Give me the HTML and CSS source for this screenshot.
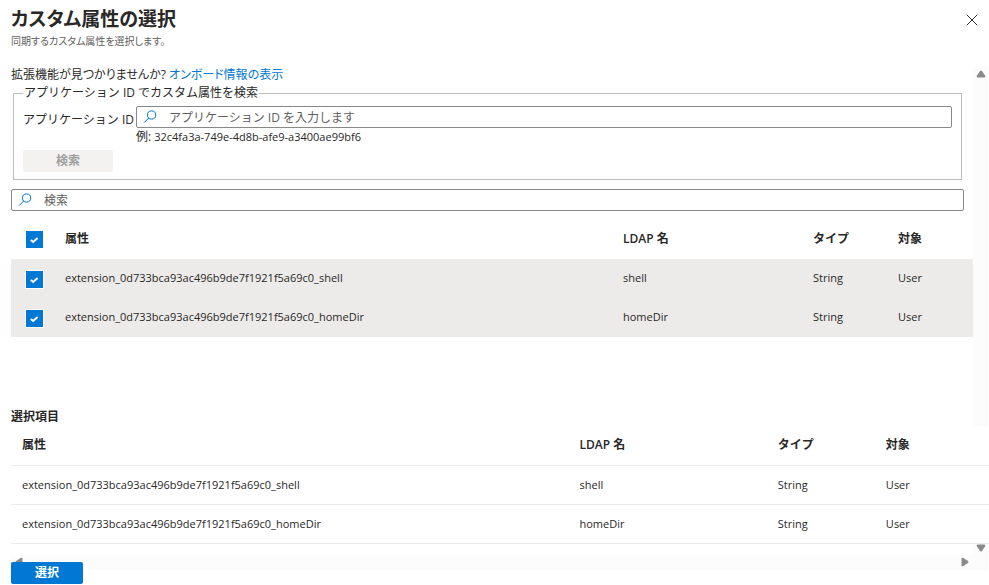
FILE: index.html
```html
<!DOCTYPE html>
<html lang="ja">
<head>
<meta charset="utf-8">
<meta name="viewport" content="width=device-width, initial-scale=1">
<title>カスタム属性の選択</title>
<link rel="stylesheet" href="styles.css">
</head>
<body>
<header class="header">
  <div>
    <h1 class="title">カスタム属性の選択</h1>
    <p class="subtitle">同期するカスタム属性を選択します。</p>
  </div>
  <button class="close" type="button" aria-label="閉じる">
    <svg width="12" height="12" viewBox="0 0 12 12"><path d="M.8.8l10.4 10.4M11.2.8L.8 11.2" fill="none" stroke="#323130" stroke-width="1"/></svg>
  </button>
</header>
<main class="body">
  <div class="vtrack">
    <svg width="10" height="8" viewBox="0 0 10 8"><path d="M4 1Q5 0 6 1L9.3 6Q9.6 7.3 8.5 7.5H1.5Q.4 7.3.7 6Z" fill="#8a8a8a"/></svg>
    <svg width="10" height="8" viewBox="0 0 10 8"><path d="M4 7Q5 8 6 7L9.3 2Q9.6.7 8.5.5H1.5Q.4.7.7 2Z" fill="#8a8a8a"/></svg>
  </div>
  <div class="content">
    <p class="hint">拡張機能が見つかりませんか? <a class="link" href="#">オンボード情報の表示</a></p>
    <fieldset class="group">
      <legend class="legend">アプリケーション ID でカスタム属性を検索</legend>
      <div class="field">
        <label class="label" for="app-id">アプリケーション ID</label>
        <div class="control">
          <div class="search">
            <svg class="glass" width="14" height="14" viewBox="0 0 14 14"><g fill="none" stroke="#0078d4" stroke-width="1"><circle cx="8.6" cy="5" r="4.1"/><path d="M5.7 8L1 12.7"/></g></svg>
            <input class="input" id="app-id" type="text" placeholder="アプリケーション ID を入力します">
          </div>
          <p class="example">例: <span class="code">32c4fa3a-749e-4d8b-afe9-a3400ae99bf6</span></p>
        </div>
      </div>
      <button class="button" type="button" disabled>検索</button>
    </fieldset>
    <div class="search">
      <svg class="glass" width="14" height="14" viewBox="0 0 14 14"><g fill="none" stroke="#0078d4" stroke-width="1"><circle cx="8.6" cy="5" r="4.1"/><path d="M5.7 8L1 12.7"/></g></svg>
      <input class="input" type="text" placeholder="検索" aria-label="検索">
    </div>
  </div>
  <table class="table choices">
    <colgroup><col class="c-check"><col class="c-name"><col class="c-ldap"><col class="c-type"><col class="c-target"></colgroup>
    <thead>
      <tr><th><input class="check" type="checkbox" checked aria-label="すべて選択"></th><th>属性</th><th>LDAP 名</th><th>タイプ</th><th>対象</th></tr>
    </thead>
    <tbody>
      <tr><td><input class="check" type="checkbox" checked aria-label="shell"></td><td>extension_0d733bca93ac496b9de7f1921f5a69c0_shell</td><td>shell</td><td>String</td><td>User</td></tr>
      <tr><td><input class="check" type="checkbox" checked aria-label="homeDir"></td><td>extension_0d733bca93ac496b9de7f1921f5a69c0_homeDir</td><td>homeDir</td><td>String</td><td>User</td></tr>
    </tbody>
  </table>
  <h2 class="heading">選択項目</h2>
  <table class="table chosen">
    <colgroup><col class="s-name"><col class="s-ldap"><col class="s-type"><col class="s-target"></colgroup>
    <thead>
      <tr><th>属性</th><th>LDAP 名</th><th>タイプ</th><th>対象</th></tr>
    </thead>
    <tbody>
      <tr><td>extension_0d733bca93ac496b9de7f1921f5a69c0_shell</td><td>shell</td><td>String</td><td>User</td></tr>
      <tr><td>extension_0d733bca93ac496b9de7f1921f5a69c0_homeDir</td><td>homeDir</td><td>String</td><td>User</td></tr>
    </tbody>
  </table>
  <div class="htrack">
    <svg width="8" height="10" viewBox="0 0 8 10"><path d="M1 4Q0 5 1 6L6 9.3Q7.3 9.6 7.5 8.5V1.5Q7.3.4 6 .7Z" fill="#8a8a8a"/></svg>
    <svg width="8" height="10" viewBox="0 0 8 10"><path d="M7 4Q8 5 7 6L2 9.3Q.7 9.6.5 8.5V1.5Q.7.4 2 .7Z" fill="#8a8a8a"/></svg>
  </div>
</main>
<footer class="footer">
  <button class="button primary" type="button">選択</button>
</footer>
</body>
</html>
```
FILE: styles.css
```css
* {
  box-sizing: border-box;
}

body {
  margin: 0;
  background: #fff;
  color: #292827;
  font: 12px/16px "Open Sans", "Noto Sans CJK JP", sans-serif;
}

h1, h2, p {
  margin: 0;
}

.header,
.hint {
  font-feature-settings: "palt";
}

.header {
  display: flex;
  justify-content: space-between;
  align-items: flex-start;
  height: 66px;
  padding: 6px 11px 0;
}

.title {
  font-size: 19px;
  line-height: 26px;
  font-weight: 700;
}

.subtitle {
  color: #605e5c;
  font-size: 10px;
  line-height: 18px;
}

.close {
  display: flex;
  padding: 8px 0;
  border: 0;
  background: none;
}

.body {
  position: relative;
}

.vtrack {
  position: absolute;
  top: 0;
  bottom: 0;
  right: 1px;
  z-index: -1;
  display: flex;
  flex-direction: column;
  justify-content: space-between;
  align-items: center;
  width: 15px;
  padding: 4px 0 18px;
  background: #fcfcfc;
}

.content {
  padding: 0 25px 0 11px;
}

.hint {
  padding-top: 1px;
}

.link {
  color: #0078d4;
  text-decoration: none;
}

.group {
  margin: 2px 2px 9px;
  padding: 5px 9px 7px;
  border: 1px solid #bdbdbd;
}

.legend {
  padding: 0 1px;
}

.field {
  display: flex;
  gap: 2px;
}

.label {
  padding-top: 6px;
  white-space: nowrap;
}

.control {
  flex: 1;
}

.code {
  font-size: 11px;
}

.example {
  padding-top: 1px;
}

.search {
  display: flex;
  align-items: center;
  gap: 12px;
  height: 22px;
  padding: 0 6px;
  border: 1px solid #8a8886;
  border-radius: 2px;
}

.input {
  flex: 1;
  min-width: 0;
  padding: 2px 0 0;
  border: 0;
  outline: 0;
  background: none;
  font: inherit;
}

.input::placeholder {
  color: #605e5c;
}

.button {
  display: block;
  width: 90px;
  height: 22px;
  margin-top: 5px;
  padding: 0;
  border: 0;
  border-radius: 2px;
  background: #f3f2f1;
  color: #a19f9d;
  font: inherit;
  font-weight: 700;
  line-height: 22px;
}

.primary {
  width: 72px;
  margin: 0;
  background: #0078d4;
  color: #fff;
}

.table {
  table-layout: fixed;
  border-collapse: collapse;
}

.table th,
.table td {
  height: 39px;
  padding: 0 0 0 10px;
  text-align: left;
  white-space: nowrap;
}

.table td {
  font-size: 11px;
}

.table th {
  font-weight: 600;
}

.choices {
  width: calc(100% - 27px);
  margin: 8px 16px 0 11px;
}

.choices td {
  padding-bottom: 2px;
}

.choices th {
  height: 40px;
}

.choices tbody {
  background: #edebe9;
}

.table th:first-child:has(.check),
.table td:first-child:has(.check) {
  padding: 1px 0 0 15px;
}

.c-check { width: 44px; }
.c-name { width: 58%; }
.c-ldap { width: 190px; }
.c-type { width: 85px; }
.c-target { width: 85px; }

.check {
  display: block;
  width: 17px;
  height: 17px;
  margin: 0;
  appearance: none;
  background: #0078d4 url("data:image/svg+xml,%3Csvg xmlns='http://www.w3.org/2000/svg' viewBox='0 0 17 17'%3E%3Cpath d='M4.8 8.9l2.4 2.1 4.4-4' fill='none' stroke='white' stroke-width='2'/%3E%3C/svg%3E");
}

td .check {
  outline: 1px solid #fff;
}

.heading {
  margin: 71px 11px 0;
  font-size: 12px;
  line-height: 18px;
}

.chosen {
  width: calc(100% - 11px);
  margin-left: 11px;
  background: #fff;
}

.chosen th,
.chosen td {
  padding-left: 11px;
  border-bottom: 1px solid #edebe9;
}

.chosen th {
  height: 39px;
}

.s-name { width: 57%; }
.s-ldap { width: 198px; }
.s-type { width: 108px; }
.s-target { width: 114px; }

.htrack {
  display: flex;
  justify-content: space-between;
  align-items: center;
  height: 15px;
  margin: 11px 16px 0 11px;
  padding: 0 4px;
  background: #fcfcfc;
}

.footer {
  position: relative;
  margin-top: -8px;
  padding: 0 11px;
}
```
